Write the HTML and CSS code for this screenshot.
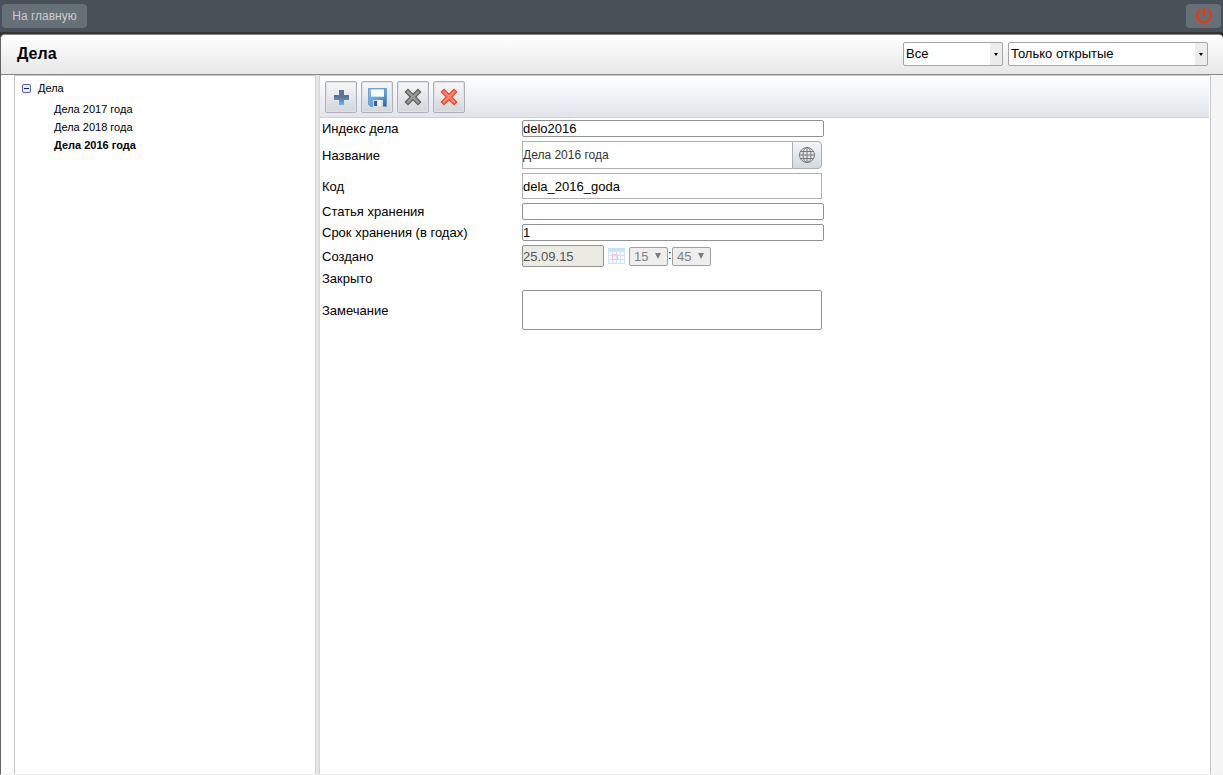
FILE: index.html
```html
<!DOCTYPE html>
<html lang="ru">
<head>
<meta charset="utf-8">
<title>Дела</title>
<link rel="stylesheet" href="styles.css">
</head>
<body>
<header class="topbar">
  <button class="top-button home" type="button">На главную</button>
  <button class="top-button power" type="button" aria-label="Выход">
    <svg width="18" height="18" viewBox="0 0 18 18" fill="none" stroke="#e23b17" stroke-width="2.6"><path d="M5.300 3A6.700 6.700 0 1 0 12.700 3M9 0.800V9"/></svg>
  </button>
</header>
<main class="window">
  <div class="titlebar">
    <h1 class="title">Дела</h1>
    <div class="filters">
      <div class="combo combo-all"><select aria-label="Тип дел"><option>Все</option></select></div>
      <div class="combo combo-open"><select aria-label="Состояние"><option>Только открытые</option></select></div>
    </div>
  </div>
  <div class="workspace">
    <nav class="tree">
      <div class="tree-root">
        <svg width="9" height="9" viewBox="0 0 9 9"><rect x=".5" y=".5" width="8" height="8" rx="1.5" fill="#eef0fa" stroke="#5664a8"/><path d="M2 4.500h5" stroke="#10188c"/></svg>
        <span>Дела</span>
      </div>
      <ul class="tree-list">
        <li>Дела 2017 года</li>
        <li>Дела 2018 года</li>
        <li class="current">Дела 2016 года</li>
      </ul>
    </nav>
    <div class="splitter"></div>
    <section class="content">
      <div class="toolbar">
        <button class="tool" type="button" aria-label="Добавить">
          <svg width="20" height="20" viewBox="0 0 20 20"><defs><linearGradient id="plus" x2="0" y2="1"><stop offset=".45" stop-color="#5d7195"/><stop offset="1" stop-color="#5cb9f5"/></linearGradient></defs><path d="M8 3h5v5h5v5h-5v5H8v-5H3V8h5z" fill="url(#plus)"/></svg>
        </button>
        <button class="tool" type="button" aria-label="Сохранить">
          <svg width="20" height="20" viewBox="0 0 20 20"><defs><linearGradient id="disk" x2="1" y2="1"><stop stop-color="#8fc0ee"/><stop offset=".6" stop-color="#5b9bdb"/><stop offset="1" stop-color="#2a5c9f"/></linearGradient></defs><path d="M1.500 1.500h18v18H3.500l-2-2z" fill="url(#disk)" stroke="#6a9fd6"/><path d="M4 2h13v8H4z" fill="#fafcff"/><path d="M4 2h13v1H4z" fill="#c5def5"/><path d="M4 9h13v1H4z" fill="#cfe0f2"/><path d="M6 13h10v7H6z" fill="#dcdddd"/><path d="M7 14h3v5H7z" fill="#3b5f90"/><path d="M11 13h3v6h-3z" fill="#f4f4f2"/></svg>
        </button>
        <button class="tool" type="button" aria-label="Закрыть">
          <svg width="20" height="20" viewBox="0 0 20 20"><path d="M5 5l10 10M15 5L5 15" stroke="#5a5d59" stroke-width="5" stroke-linecap="square" stroke-linejoin="round"/><path d="M5 5l10 10M15 5L5 15" stroke="#989b96" stroke-width="2.600" stroke-linecap="square"/></svg>
        </button>
        <button class="tool" type="button" aria-label="Удалить">
          <svg width="20" height="20" viewBox="0 0 20 20"><path d="M5 5l10 10M15 5L5 15" stroke="#e8432c" stroke-width="5" stroke-linecap="square"/><path d="M5 5l10 10M15 5L5 15" stroke="#ff8469" stroke-width="2.600" stroke-linecap="square"/></svg>
        </button>
      </div>
      <form class="form">
        <label for="index">Индекс дела</label>
        <input class="field thin" id="index" type="text" value="delo2016">
        <label for="name">Название</label>
        <div class="name-group">
          <input class="name-input" id="name" type="text" value="Дела 2016 года">
          <button class="globe" type="button" aria-label="Языки">
            <svg width="16" height="16" viewBox="0 0 16 16" fill="none" stroke="#77797b"><circle cx="8" cy="8" r="7.500"/><ellipse cx="8" cy="8" rx="4" ry="7.500"/><path d="M8 .5v15M.5 8h15M2 4.500h12M2 11.500h12"/></svg>
          </button>
        </div>
        <label for="code">Код</label>
        <input class="field code" id="code" type="text" value="dela_2016_goda">
        <label for="article">Статья хранения</label>
        <input class="field thin" id="article" type="text">
        <label for="term">Срок хранения (в годах)</label>
        <input class="field thin" id="term" type="text" value="1">
        <label for="created">Создано</label>
        <div class="date-group">
          <input class="date" id="created" type="text" value="25.09.15" readonly>
          <svg class="calendar" width="17" height="16" viewBox="0 0 17 16"><path d="M0 0h17v16H0z" fill="#d3e4f8"/><path d="M0 0h17v3H0z" fill="#c5e4f8"/><path d="M1 4h3v3H1zM5 4h3v3H5zM9 4h3v3H9zM13 4h3v3h-3zM1 8h3v3H1zM5 8h3v3H5zM9 8h3v3H9zM13 8h3v3h-3zM1 12h3v3H1zM5 12h3v3H5zM9 12h3v3H9zM13 12h3v3h-3z" fill="#f5f9fe"/><path d="M4.500 6.500h5v5h-5z" fill="none" stroke="#f6c3c8"/></svg>
          <div class="time"><select aria-label="Часы" disabled><option>15</option></select></div>
          <span class="colon">:</span>
          <div class="time"><select aria-label="Минуты" disabled><option>45</option></select></div>
        </div>
        <span>Закрыто</span>
        <span></span>
        <label for="note">Замечание</label>
        <textarea class="note" id="note"></textarea>
      </form>
    </section>
    <div class="gutter"></div>
  </div>
</main>
</body>
</html>
```
FILE: styles.css
```css
* { box-sizing: border-box; }
body {
  margin: 0;
  min-height: 100vh;
  display: flex;
  flex-direction: column;
  background: #373435;
  color: #000;
  font: 13px/15px "Liberation Sans", Arial, sans-serif;
}
button, input, select, textarea { font: inherit; color: inherit; margin: 0; }
svg { display: block; }
.topbar {
  height: 32px;
  padding: 0 2px;
  display: flex;
  align-items: center;
  justify-content: space-between;
  background: #495158;
}
.top-button {
  height: 24px;
  border: 0;
  border-radius: 4px;
  background: #667077;
  color: #ccc;
  display: flex;
  align-items: center;
  justify-content: center;
}
.home { width: 85px; padding: 0; font-size: 12px; }
.power { width: 35px; padding: 0; }
.window {
  flex: 1;
  display: flex;
  flex-direction: column;
  margin-top: 2px;
  border-left: 1px solid #66646a;
  border-top: 1px solid #858585;
  border-bottom: 1px solid #eee;
  border-radius: 5px 5px 0 0;
  background: #fff;
}
.titlebar {
  height: 40px;
  padding: 0 15px 2px 16px;
  display: flex;
  align-items: center;
  justify-content: space-between;
  border-bottom: 1px solid #888;
  border-radius: 4px 4px 0 0;
  background: linear-gradient(#fff, #e7e7e7);
}
.title { margin: 0; font-size: 16px; line-height: 18px; }
.filters { display: flex; gap: 5px; }
.combo {
  position: relative;
  height: 24px;
  border: 1px solid #a5a5a5;
  border-radius: 2px;
  background: linear-gradient(90deg, transparent calc(100% - 12px), #ececec 0);
  background-color: #fff;
}
.combo-all { width: 100px; }
.combo-open { width: 200px; }
.combo select, .time select {
  appearance: none;
  display: block;
  width: 100%;
  height: 100%;
  border: 0;
  background: transparent;
  padding: 0 2px;
}
.combo::after {
  content: "";
  position: absolute;
  right: 4px;
  top: 10px;
  border: 2px solid transparent;
  border-top: 3px solid #000;
  border-bottom: 0;
}
.workspace { flex: 1; display: flex; padding-left: 13px; }
.tree {
  width: 301px;
  padding: 5px 7px;
  border-left: 1px solid #c4c4c4;
  border-top: 1px solid #c8c8c8;
  font-size: 11px;
  line-height: 18px;
}
.tree-root { display: flex; align-items: center; gap: 7px; line-height: 14px; }
.tree-list { margin: 5px 0 0; padding: 0 0 0 32px; list-style: none; }
.current { font-weight: bold; }
.splitter {
  width: 5px;
  border-left: 1px solid #d2d2d2;
  border-right: 1px solid #d2d2d2;
  background: #e6e6e6;
}
.content { flex: 1; border-right: 1px solid #c5c8ce; }
.toolbar {
  height: 43px;
  margin-right: 1px;
  padding: 5px;
  display: flex;
  gap: 4px;
  border-top: 1px solid #c8c8c8;
  border-bottom: 1px solid #cdd0d5;
  background: linear-gradient(#fff, #e0e5eb);
}
.tool {
  width: 32px;
  height: 32px;
  padding: 0;
  border: 1px solid #adb0b9;
  border-radius: 2px;
  background: linear-gradient(#f8f8fa, #d2d6d9);
  box-shadow: inset 0 0 0 1px #e1e3e9;
  display: flex;
  align-items: center;
  justify-content: center;
}
.form {
  padding: 2px;
  display: grid;
  grid-template-columns: 200px 1fr;
  row-gap: 4px;
  align-items: center;
}
.field, .date, .note {
  border: 1px solid #929292;
  border-radius: 2px;
  background: #fff;
  padding: 0;
}
.field { width: 302px; }
.thin { height: 17px; }
.code { width: 300px; height: 26px; border-color: #b0b0b0; border-radius: 0; }
.name-group { width: 300px; height: 28px; display: flex; }
.name-input {
  flex: 1;
  min-width: 0;
  padding: 0;
  border: 1px solid #b0b0b0;
  border-right: 0;
  background: #fff;
  color: #333;
  font-size: 12px;
}
.globe {
  width: 30px;
  padding: 0;
  border: 1px solid #adb0b2;
  border-radius: 0 4px 4px 0;
  background: linear-gradient(#f4f5f6, #d2dae0);
  display: flex;
  align-items: center;
  justify-content: center;
}
.date-group { display: flex; align-items: center; height: 22px; }
.date { width: 82px; height: 22px; background: #ebebe4; color: #545454; }
.calendar { margin: 0 4px; }
.time {
  position: relative;
  width: 39px;
  height: 19px;
  border: 1px solid #a0a0a0;
  border-radius: 2px;
  background: #eee;
}
.time select { padding: 0 4px; color: #808080; opacity: 1; }
.time::after {
  content: "";
  position: absolute;
  right: 6px;
  top: 5px;
  border: 3px solid transparent;
  border-top: 6px solid #7c7c7c;
  border-bottom: 0;
}
.colon { width: 4px; margin-bottom: 4px; }
.note { width: 300px; height: 40px; resize: none; }
.gutter { width: 12px; background: #f5f5f5; }
```
